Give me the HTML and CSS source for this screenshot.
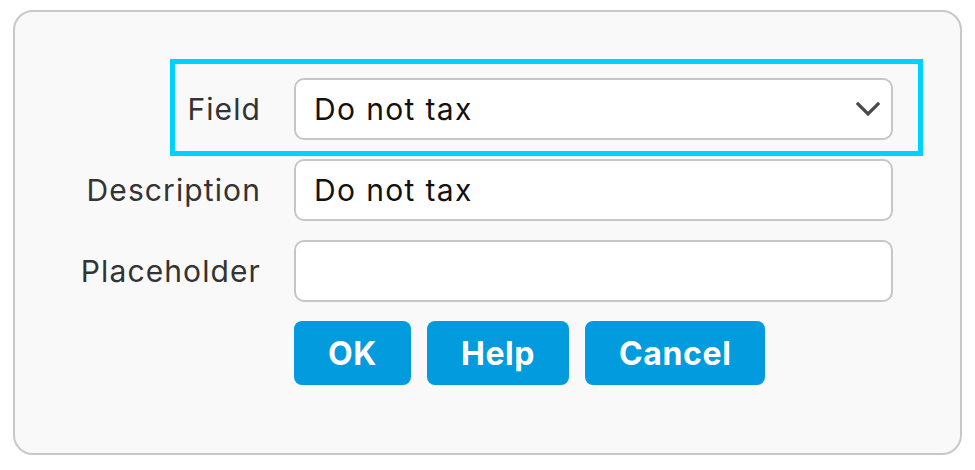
FILE: index.html
```html
<!DOCTYPE html>
<html lang="en">
<head>
<meta charset="utf-8">
<title>Field dialog</title>
<link rel="stylesheet" href="styles.css">
</head>
<body>
<div class="panel">
  <div class="row row-focus">
    <label class="label">Field</label>
    <div class="control select">
      <span class="value">Do not tax</span>
      <svg class="chevron" width="24" height="14" viewBox="0 0 24 14"><path d="M2 2 L12 12 L22 2" fill="none" stroke="#4a4a4a" stroke-width="3.2" stroke-linecap="square"/></svg>
    </div>
  </div>
  <div class="row">
    <label class="label">Description</label>
    <div class="control"><span class="value">Do not tax</span></div>
  </div>
  <div class="row">
    <label class="label">Placeholder</label>
    <div class="control"></div>
  </div>
  <div class="buttons">
    <button class="btn">OK</button>
    <button class="btn">Help</button>
    <button class="btn">Cancel</button>
  </div>
</div>
</body>
</html>
```
FILE: styles.css
```css
html, body {
  margin: 0;
  padding: 0;
  background: #ffffff;
}
body {
  font-family: Inter, "Noto Sans", "Liberation Sans", sans-serif;
}
.panel {
  margin: 10px 0 0 13px;
  width: 949px;
  height: 445px;
  box-sizing: border-box;
  border: 2px solid #c8c8c8;
  border-radius: 20px;
  background: #f9f9f9;
  padding: 66px 0 0 56px;
  display: flex;
  flex-direction: column;
  align-items: flex-start;
  gap: 19px;
}
.row {
  display: flex;
  align-items: center;
  gap: 34px;
  position: relative;
}
.row-focus::after {
  content: "";
  position: absolute;
  left: 99px;
  right: -30px;
  top: -19px;
  bottom: -16px;
  border: 5px solid #00d2ff;
  pointer-events: none;
}
.label {
  width: 190px;
  margin-right: -1px;
  text-align: right;
  font-size: 30px;
  letter-spacing: 1.1px;
  color: #333333;
  white-space: nowrap;
}
.control {
  width: 599px;
  height: 62px;
  box-sizing: border-box;
  border: 2px solid #c6c6c6;
  border-radius: 10px;
  background: #ffffff;
  padding: 0 11px 0 18px;
  display: flex;
  align-items: center;
  justify-content: space-between;
}
.value {
  font-size: 30px;
  letter-spacing: 1.35px;
  color: #111111;
}
.buttons {
  display: flex;
  gap: 16px;
  margin-left: 223px;
}
.btn {
  height: 64px;
  padding: 0 34px;
  border: none;
  border-radius: 8px;
  background: #029bdd;
  color: #ffffff;
  font-family: Inter, "Noto Sans", "Liberation Sans", sans-serif;
  font-weight: 700;
  font-size: 32px;
  letter-spacing: 0.6px;
}
```
